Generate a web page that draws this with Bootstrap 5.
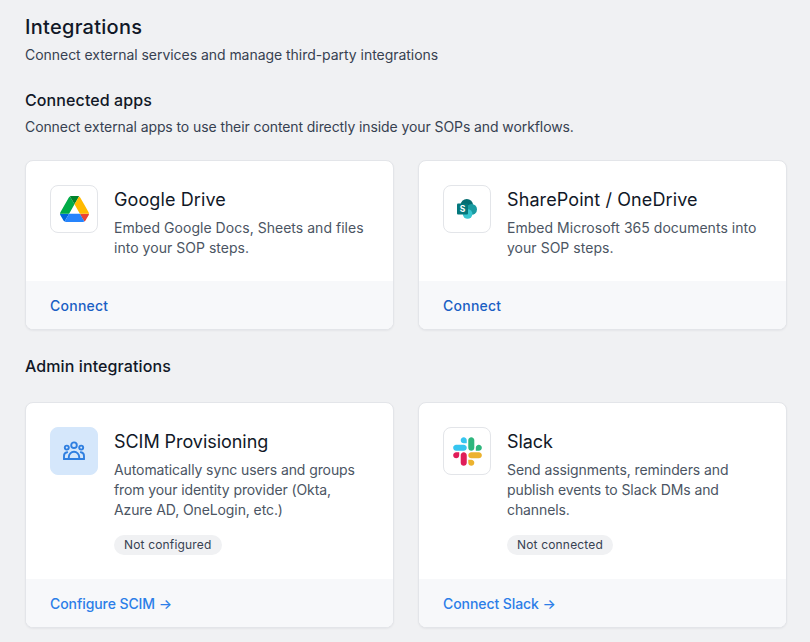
<!DOCTYPE html>
<html lang="en">
<head>
    <meta charset="UTF-8">
    <title>Integrations</title>
    <link href="https://cdn.jsdelivr.net/npm/bootstrap@5.3.0/dist/css/bootstrap.min.css" rel="stylesheet">
    <style>
        html, body { height: 642px; overflow: hidden; }
        body { background: #f0f1f3; color: #111827; font-family: "Inter", "Noto Sans", sans-serif; }
        .page-wrap { padding: 15px 23px 0 25px; }
        .page-title { font-size: 20px; line-height: 24px; font-weight: 500; margin: 0; letter-spacing: .28px; }
        .page-sub { font-size: 14px; line-height: 20px; color: #374151; margin: 6px 0 0; letter-spacing: -.04px; }
        .sect-title { font-size: 16px; line-height: 20px; font-weight: 500; margin: 0; letter-spacing: .1px; }
        .sect-title.first { margin-top: 25px; }
        .sect-title.second { margin-top: 26px; }
        .sect-sub { font-size: 14px; line-height: 20px; color: #374151; margin: 7px 0 0; letter-spacing: -.09px; }
        .app-grid { display: grid; grid-template-columns: 369px 369px; column-gap: 24px; margin-top: 23px; }
        .app-grid.admin { margin-top: 26px; }
        .app-card { background: #fff; border: 1px solid #e3e5e9; border-radius: 8px; overflow: hidden; box-shadow: 0 1px 2px rgba(20,23,31,.05); display: flex; flex-direction: column; height: 170px; }
        .app-grid.admin .app-card { height: 226px; }
        .app-main { display: flex; gap: 16px; flex-grow: 1; padding: 24px 24px 0; }
        .app-text { padding-top: 2px; }
        .app-logo { width: 48px; height: 48px; flex: none; background: #fff; border: 1px solid #e3e5e9; border-radius: 8px; display: flex; align-items: center; justify-content: center; }
        .app-logo.tint { background: #d5e7fb; border-color: #d5e7fb; }
        .app-name { font-size: 18px; line-height: 26px; font-weight: 400; margin: 0 0 5px; letter-spacing: .1px; }
        .admin .app-name { letter-spacing: -.05px; }
        .app-desc { font-size: 14px; line-height: 20px; color: #4b5563; margin: 0; letter-spacing: .03px; }
        .admin .app-desc { letter-spacing: -.1px; }
        .app-pill { display: inline-block; background: #f0f1f3; color: #374151; font-size: 12px; line-height: 20px; padding: 0 10px; border-radius: 10px; margin-top: 15px; letter-spacing: .17px; }
        .app-foot { background: #f7f8fa; height: 48px; padding: 0 24px; display: flex; align-items: center; font-size: 14px; }
        .app-foot a { text-decoration: none; color: #1a5fc4; font-weight: 500; letter-spacing: .25px; }
        .app-foot a.bright { color: #2c7ee8; letter-spacing: -.08px; }
    </style>
</head>
<body>
<div class="page-wrap">
    <h1 class="page-title">Integrations</h1>
    <p class="page-sub">Connect external services and manage third-party integrations</p>

    <h2 class="sect-title first">Connected apps</h2>
    <p class="sect-sub">Connect external apps to use their content directly inside your SOPs and workflows.</p>

    <div class="app-grid">
        <div class="app-card">
            <div class="app-main">
                <div class="app-logo">
                    <svg width="29" height="26" viewBox="0 0 87.3 78">
                        <path d="m6.6 66.85 3.85 6.65c.8 1.4 1.95 2.5 3.3 3.3l13.75-23.8h-27.5c0 1.55.4 3.1 1.2 4.5z" fill="#0066da"/>
                        <path d="m43.65 25-13.75-23.8c-1.35.8-2.5 1.9-3.3 3.3l-25.4 44a9.06 9.06 0 0 0 -1.2 4.5h27.5z" fill="#00ac47"/>
                        <path d="m73.55 76.8c1.35-.8 2.5-1.9 3.3-3.3l1.6-2.75 7.65-13.25c.8-1.4 1.2-2.95 1.2-4.5h-27.5l5.85 11.5z" fill="#ea4335"/>
                        <path d="m43.65 25 13.75-23.8c-1.35-.8-2.9-1.2-4.5-1.2h-18.5c-1.6 0-3.15.45-4.5 1.2z" fill="#00832d"/>
                        <path d="m59.8 53h-32.3l-13.75 23.8c1.35.8 2.9 1.2 4.5 1.2h50.8c1.6 0 3.15-.45 4.5-1.2z" fill="#2684fc"/>
                        <path d="m73.4 26.5-12.7-22c-.8-1.4-1.95-2.5-3.3-3.3l-13.75 23.8 16.15 28h27.45c0-1.55-.4-3.1-1.2-4.5z" fill="#ffba00"/>
                    </svg>
                </div>
                <div class="app-text">
                    <h3 class="app-name">Google Drive</h3>
                    <p class="app-desc">Embed Google Docs, Sheets and files into your SOP steps.</p>
                </div>
            </div>
            <div class="app-foot"><a href="#">Connect</a></div>
        </div>
        <div class="app-card">
            <div class="app-main">
                <div class="app-logo">
                    <svg width="20" height="20" viewBox="0 0 20 20">
                        <circle cx="9.8" cy="6.2" r="6.2" fill="#036c70"/>
                        <circle cx="14.6" cy="10.4" r="5.4" fill="#1a9ba1"/>
                        <circle cx="10.6" cy="15" r="4.8" fill="#37c6d0"/>
                        <rect x="0" y="4.4" width="11" height="11" rx="1" fill="#04787c"/>
                        <text x="5.5" y="12.9" text-anchor="middle" font-size="8.5" font-weight="700" fill="#fff" font-family="Inter, sans-serif">S</text>
                    </svg>
                </div>
                <div class="app-text">
                    <h3 class="app-name">SharePoint / OneDrive</h3>
                    <p class="app-desc">Embed Microsoft 365 documents into your SOP steps.</p>
                </div>
            </div>
            <div class="app-foot"><a href="#">Connect</a></div>
        </div>
    </div>

    <h2 class="sect-title second">Admin integrations</h2>

    <div class="app-grid admin">
        <div class="app-card">
            <div class="app-main">
                <div class="app-logo tint">
                    <svg width="24" height="24" viewBox="0 0 24 24" fill="none" stroke="#2f7fe0" stroke-width="1.9" stroke-linecap="round" stroke-linejoin="round">
                        <circle cx="12" cy="6.2" r="2.8"/>
                        <circle cx="4.8" cy="8.6" r="2"/>
                        <circle cx="19.2" cy="8.6" r="2"/>
                        <path d="M6.8 20v-2a5.2 5.2 0 0 1 10.4 0v2"/>
                        <path d="M2 20h20"/>
                        <path d="M2 20v-3c0-2 1.2-3.6 3.2-3.8M22 20v-3c0-2-1.2-3.6-3.2-3.8"/>
                    </svg>
                </div>
                <div class="app-text">
                    <h3 class="app-name">SCIM Provisioning</h3>
                    <p class="app-desc">Automatically sync users and groups from your identity provider (Okta, Azure AD, OneLogin, etc.)</p>
                    <span class="app-pill">Not configured</span>
                </div>
            </div>
            <div class="app-foot"><a class="bright" href="#">Configure SCIM →</a></div>
        </div>
        <div class="app-card">
            <div class="app-main">
                <div class="app-logo">
                    <svg width="29" height="29" viewBox="0 0 127 127">
                        <path d="M27.2 80c0 7.3-5.9 13.2-13.2 13.2C6.7 93.2.8 87.3.8 80c0-7.3 5.9-13.2 13.2-13.2h13.2V80zm6.6 0c0-7.3 5.9-13.2 13.2-13.2 7.3 0 13.2 5.9 13.2 13.2v33c0 7.3-5.9 13.2-13.2 13.2-7.3 0-13.2-5.9-13.2-13.2V80z" fill="#E01E5A"/>
                        <path d="M47 27c-7.3 0-13.2-5.9-13.2-13.2C33.8 6.5 39.7.6 47 .6c7.3 0 13.2 5.9 13.2 13.2V27H47zm0 6.7c7.3 0 13.2 5.9 13.2 13.2 0 7.3-5.9 13.2-13.2 13.2H13.9C6.6 60.1.7 54.2.7 46.9c0-7.3 5.9-13.2 13.2-13.2H47z" fill="#36C5F0"/>
                        <path d="M99.9 46.9c0-7.3 5.9-13.2 13.2-13.2 7.3 0 13.2 5.9 13.2 13.2 0 7.3-5.9 13.2-13.2 13.2H99.9V46.9zm-6.6 0c0 7.3-5.9 13.2-13.2 13.2-7.3 0-13.2-5.9-13.2-13.2V13.8C66.9 6.5 72.8.6 80.1.6c7.3 0 13.2 5.9 13.2 13.2v33.1z" fill="#2EB67D"/>
                        <path d="M80.1 99.8c7.3 0 13.2 5.9 13.2 13.2 0 7.3-5.9 13.2-13.2 13.2-7.3 0-13.2-5.9-13.2-13.2V99.8h13.2zm0-6.6c-7.3 0-13.2-5.9-13.2-13.2 0-7.3 5.9-13.2 13.2-13.2h33.1c7.3 0 13.2 5.9 13.2 13.2 0 7.3-5.9 13.2-13.2 13.2H80.1z" fill="#ECB22E"/>
                    </svg>
                </div>
                <div class="app-text">
                    <h3 class="app-name">Slack</h3>
                    <p class="app-desc">Send assignments, reminders and publish events to Slack DMs and channels.</p>
                    <span class="app-pill">Not connected</span>
                </div>
            </div>
            <div class="app-foot"><a class="bright" href="#">Connect Slack →</a></div>
        </div>
    </div>
</div>
<script src="https://cdn.jsdelivr.net/npm/bootstrap@5.3.0/dist/js/bootstrap.bundle.min.js"></script>
</body>
</html>
